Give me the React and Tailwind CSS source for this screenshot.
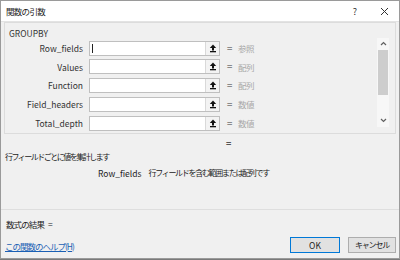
import React from "react";

const rows = [
  { label: "Row_fields", type: "参照", focus: true },
  { label: "Values", type: "配列" },
  { label: "Function", type: "配列" },
  { label: "Field_headers", type: "数値" },
  { label: "Total_depth", type: "数値" },
];

const font = { fontFamily: '"Noto Sans CJK JP", "Noto Sans", sans-serif' };

function RefButton() {
  return (
    <div className="w-[14px] h-full border-l border-[#d9d9d9] bg-[#f3f3f3] flex items-center justify-center">
      <svg width="8" height="9" viewBox="0 0 8 9">
        <polygon points="4,0.5 0.8,4 7.2,4" fill="#111" />
        <rect x="3" y="4" width="2" height="2.5" fill="#111" />
        <rect x="1" y="7" width="6" height="1.3" fill="#111" />
      </svg>
    </div>
  );
}

function ArgRow({ label, type, focus }) {
  return (
    <div className="flex items-center h-[15px]">
      <div className="w-[74px] text-right text-[8.5px] text-[#333] leading-none">{label}</div>
      <div className="ml-[6px] w-[131px] h-full bg-white border border-[#bfbfbf] flex">
        <div className="flex-1 flex items-center pl-[2px]">
          {focus && <div className="w-px h-[9px] bg-[#222]" />}
        </div>
        <RefButton />
      </div>
      <div className="ml-[7px] w-[8px] text-[9px] text-[#8a8a8a] leading-none font-bold">=</div>
      <div className="ml-[3px] text-[8.5px] text-[#a8a8a8] leading-none tracking-[-0.5px]">{type}</div>
    </div>
  );
}

function Scrollbar() {
  return (
    <div className="w-[12px] h-[89px] bg-[#f7f7f7] flex flex-col items-center">
      <div className="h-[12px] flex items-center justify-center">
        <svg width="7" height="5" viewBox="0 0 7 5">
          <polyline points="1,4 3.5,1.5 6,4" fill="none" stroke="#606060" strokeWidth="1.2" />
        </svg>
      </div>
      <div className="w-[10px] h-[45px] bg-[#cdcdcd]" />
      <div className="flex-1" />
      <div className="h-[12px] flex items-center justify-center">
        <svg width="7" height="5" viewBox="0 0 7 5">
          <polyline points="1,1 3.5,3.5 6,1" fill="none" stroke="#606060" strokeWidth="1.2" />
        </svg>
      </div>
    </div>
  );
}

export default function App() {
  return (
    <div className="w-[400px] h-[260px] bg-[#7a7a7a] overflow-hidden" style={font}>
      <div className="w-[400px] h-[259px] border border-[#9a9a9a] bg-[#f0f0f0] flex flex-col">
        {/* title bar */}
        <div className="h-[21px] bg-white border-b border-[#e3e3e3] flex items-center pl-[5px] pr-[10px]">
          <span className="text-[8.5px] text-[#222] leading-none tracking-[-0.7px]">関数の引数</span>
          <div className="flex-1" />
          <span className="text-[9px] text-[#333] leading-none mr-[23px]">?</span>
          <svg width="9" height="9" viewBox="0 0 9 9">
            <path d="M1 1 L8 8 M8 1 L1 8" stroke="#333" strokeWidth="1" />
          </svg>
        </div>

        <div className="flex-1 flex flex-col px-[3px]">
          {/* group box */}
          <div className="h-[112px] border border-[#dcdcdc] flex flex-col pl-[4px]">
            <div className="text-[8.5px] text-[#333] leading-none mt-[6px]">GROUPBY</div>
            <div className="flex mt-[3px]">
              <div className="w-[368px] flex flex-col gap-[3.75px]">
                {rows.map((r) => (
                  <ArgRow key={r.label} {...r} />
                ))}
              </div>
              <div className="-mt-[3px]">
                <Scrollbar />
              </div>
            </div>
          </div>

          <div className="text-[9px] text-[#555] leading-none font-bold ml-[222px] mt-[5px]">=</div>
          <div className="text-[8px] text-[#222] leading-none mt-[5px] ml-[1px] tracking-[-1.5px]">行フィールドごとに値を集計します</div>
          <div className="flex text-[8.5px] text-[#222] leading-none mt-[8px] ml-[94px]">
            <span>Row_fields</span>
            <span className="ml-[7px] text-[8px] tracking-[-1.3px]">行フィールドを含む範囲または配列です</span>
          </div>

          <div className="flex-1" />
          <div className="border-t border-[#dedede] -mx-[3px]" />
          <div className="flex items-center text-[8.5px] text-[#222] leading-none mt-[10px] ml-[2px]">
            <span className="tracking-[-0.9px]">数式の結果</span>
            <span className="ml-[4px]">=</span>
          </div>
          <div className="flex items-end mt-[9px] mb-[5px]">
            <a className="text-[8.5px] text-[#1a5fb4] underline leading-none ml-[1px] mb-[3px] tracking-[-1px]">この関数のヘルプ(H)</a>
            <div className="flex-1" />
            <button className="w-[50px] h-[16px] bg-[#e1e1e1] border border-[#0078d7] text-[8.5px] text-[#222] leading-none">OK</button>
            <button className="ml-[8px] w-[48px] h-[16px] bg-[#e1e1e1] border border-[#adadad] text-[8px] text-[#222] leading-none tracking-[-1.2px]">キャンセル</button>
          </div>
        </div>
      </div>
    </div>
  );
}
